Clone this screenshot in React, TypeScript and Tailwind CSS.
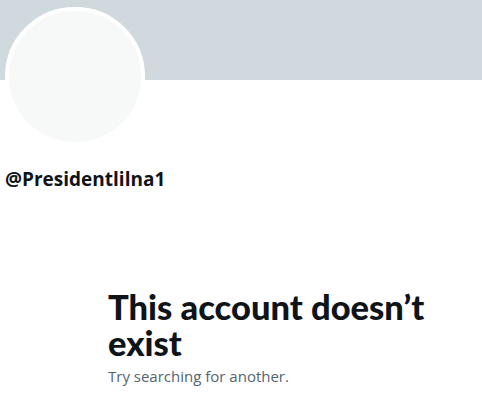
export default function App() {
  return (
    <div className="w-[482px] h-[417px] bg-white overflow-hidden" style={{ fontFamily: '"Open Sans", "Noto Sans", sans-serif' }}>
      <div className="h-[80px] bg-[#cfd9de]" />
      <div className="px-[5px]">
        <div className="-mt-[73px] w-[140px] h-[139px] rounded-full border-4 border-white bg-[#f7f9f9]" />
        <div className="mt-[21px] text-[19px] leading-[24px] font-bold text-[#0f1419]">@Presidentlilna1</div>
      </div>
      <div className="pl-[108px] pt-[98px]">
        <h1 className="font-['Lato',sans-serif] text-[34.5px] leading-[36px] font-black text-[#0f1419]">This account doesn’t exist</h1>
        <p className="mt-[5px] text-[15px] leading-[20px] text-[#536471]">Try searching for another.</p>
      </div>
    </div>
  );
}
